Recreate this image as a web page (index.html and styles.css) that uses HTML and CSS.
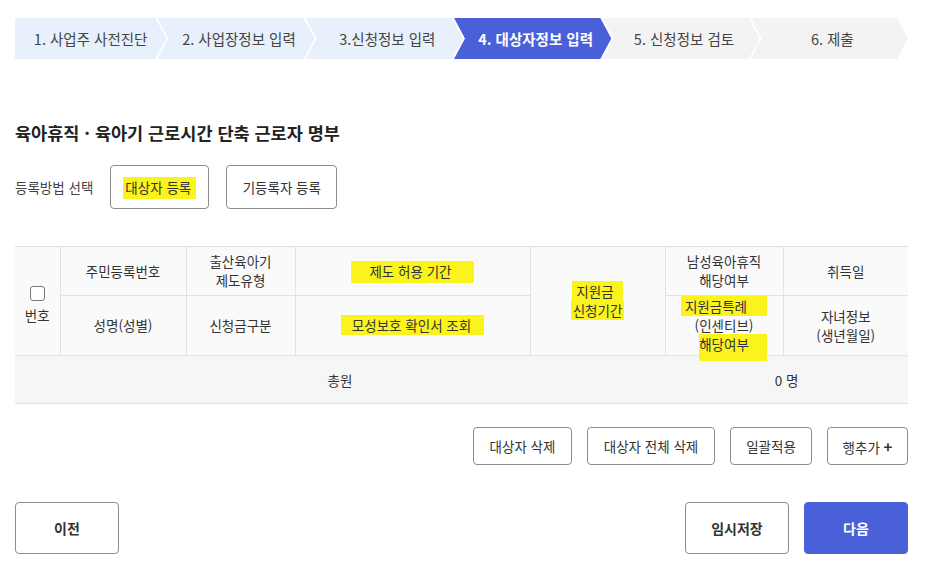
FILE: index.html
```html
<!DOCTYPE html>
<html lang="ko">
<head>
  <meta charset="UTF-8">
  <title>대상자정보 입력</title>
  <link rel="stylesheet" href="styles.css">
</head>
<body>
  <div class="page">
    <!-- Steps -->
    <ol class="steps">
      <li class="step done first">1. 사업주 사전진단</li>
      <li class="step done">2. 사업장정보 입력</li>
      <li class="step done">3.신청정보 입력</li>
      <li class="step current">4. 대상자정보 입력</li>
      <li class="step todo">5. 신청정보 검토</li>
      <li class="step todo">6. 제출</li>
    </ol>

    <h2 class="title">육아휴직 · 육아기 근로시간 단축 근로자 명부</h2>

    <div class="reg-row">
      <span class="reg-label">등록방법 선택</span>
      <button class="btn btn-reg reg-self"><span class="mark mark-reg">대상자 등록</span></button>
      <button class="btn btn-reg reg-old">기등록자 등록</button>
    </div>

    <table class="roster">
      <colgroup>
        <col style="width:45px">
        <col style="width:126px">
        <col style="width:109px">
        <col style="width:235px">
        <col style="width:135px">
        <col style="width:118px">
        <col style="width:125px">
      </colgroup>
      <thead>
        <tr class="head-1">
          <th rowspan="2" class="col-check">
            <span class="checkbox"></span>
            <span class="no-label">번호</span>
          </th>
          <th>주민등록번호</th>
          <th>출산육아기<br>제도유형</th>
          <th><span class="mark mark-period">제도 허용 기간</span></th>
          <th rowspan="2" class="col-apply"><span class="mark mark-apply">지원금</span><br><span class="mark mark-apply2">신청기간</span></th>
          <th>남성육아휴직<br>해당여부</th>
          <th class="last">취득일</th>
        </tr>
        <tr class="head-2">
          <th>성명(성별)</th>
          <th>신청금구분</th>
          <th><span class="mark mark-check">모성보호 확인서 조회</span></th>
          <th><span class="mark mark-special">지원금특례</span><br>(인센티브)<br><span class="mark mark-yn">해당여부</span></th>
          <th class="last">자녀정보<br>(생년월일)</th>
        </tr>
      </thead>
      <tfoot>
        <tr class="total">
          <td colspan="5">총원</td>
          <td colspan="2">0 명</td>
        </tr>
      </tfoot>
    </table>

    <div class="actions">
      <button class="btn btn-sm">대상자 삭제</button>
      <button class="btn btn-sm">대상자 전체 삭제</button>
      <button class="btn btn-sm">일괄적용</button>
      <button class="btn btn-sm">행추가 <b class="plus">+</b></button>
    </div>

    <div class="nav">
      <button class="btn btn-lg">이전</button>
      <div class="nav-right">
        <button class="btn btn-lg">임시저장</button>
        <button class="btn btn-lg btn-primary">다음</button>
      </div>
    </div>
  </div>
</body>
</html>
```

FILE: styles.css
```css
body {
  margin: 0;
  background: #fff;
  font-family: "Noto Sans CJK KR", "Noto Sans", sans-serif;
  color: #333;
}
.page {
  width: 893px;
  margin-left: 15px;
  padding-top: 18px;
}

/* Steps */
.steps {
  display: flex;
  list-style: none;
  margin: 0;
  padding: 0;
  height: 41px;
}
.step {
  flex: 1;
  display: flex;
  align-items: center;
  justify-content: center;
  font-size: 14.5px;
  color: #444;
  margin-left: -9px;
  padding-left: 6px;
  clip-path: polygon(0 0, calc(100% - 11px) 0, 100% 50%, calc(100% - 11px) 100%, 0 100%, 11px 50%);
}
.step.first {
  margin-left: 0;
  padding-left: 0;
  clip-path: polygon(0 0, calc(100% - 11px) 0, 100% 50%, calc(100% - 11px) 100%, 0 100%);
}
.step.done {
  background: #e7f0fb;
}
.step.current {
  background: #4a60d8;
  color: #fff;
  font-weight: bold;
}
.step.todo {
  background: #f3f3f3;
}

/* Title and registration */
.title {
  margin: 61px 0 0;
  font-size: 17.5px;
  font-weight: bold;
  color: #222;
  line-height: 26px;
}
.reg-row {
  display: flex;
  align-items: center;
  margin-top: 19px;
  gap: 17px;
}
.reg-label {
  font-size: 13.5px;
  color: #444;
}
.btn {
  font-family: inherit;
  background: #fff;
  border: 1px solid #8c8c8c;
  border-radius: 4px;
  color: #333;
  font-size: 13.5px;
  cursor: pointer;
  padding: 0;
  white-space: nowrap;
}
.btn-reg {
  height: 44px;
}
.reg-self {
  width: 99px;
}
.reg-old {
  width: 111px;
}

/* Highlighter marks */
.mark {
  background: #fbf31c;
  padding: 0 6px;
}
.mark-reg {
  padding: 0 5px 0 2px;
  box-shadow: 0 2px 0 #fbf31c;
}
.mark-period {
  padding: 0 22px 0 18px;
  box-shadow: 0 2px 0 #fbf31c;
}
.mark-check {
  padding: 0 13px 0 11px;
}
.mark-apply {
  padding: 0 9px 0 4px;
}
.mark-apply2 {
  padding: 0 2px;
}
.mark-special {
  padding: 0 20px 0 4px;
}
.mark-yn {
  padding: 0 18px 0 0;
  margin-right: -18px;
  box-shadow: 0 7px 0 #fbf31c;
}

/* Table */
.roster {
  width: 893px;
  margin-top: 37px;
  border-collapse: collapse;
  table-layout: fixed;
  font-size: 13.5px;
}
.roster th {
  font-weight: normal;
  background: #fafafa;
  border-right: 1px solid #e2e2e2;
  border-bottom: 1px solid #e2e2e2;
  line-height: 19px;
  padding: 0;
  color: #333;
}
.roster th.last {
  border-right: none;
}
.roster thead tr.head-1 th {
  border-top: 1px solid #e0e0e0;
}
.head-1 {
  height: 49px;
}
.head-2 {
  height: 60px;
}
.col-check {
  vertical-align: middle;
}
.col-apply {
  padding-top: 2px;
}
.checkbox {
  display: block;
  width: 13px;
  height: 13px;
  margin: 8px auto 5px;
  border: 1px solid #777;
  border-radius: 3px;
  background: #fff;
}
.no-label {
  display: block;
}
.total {
  height: 48px;
  background: #f6f6f6;
}
.total td {
  text-align: center;
  border-bottom: 1px solid #e2e2e2;
}

/* Actions */
.actions {
  display: flex;
  justify-content: flex-end;
  gap: 15px;
  margin-top: 23px;
}
.btn-sm {
  height: 38px;
}
.actions .btn-sm:nth-child(1) { width: 99px; }
.actions .btn-sm:nth-child(2) { width: 128px; }
.actions .btn-sm:nth-child(3) { width: 82px; }
.actions .btn-sm:nth-child(4) { width: 81px; }
.plus {
  font-size: 15px;
}

/* Bottom navigation */
.nav {
  display: flex;
  justify-content: space-between;
  margin-top: 37px;
}
.nav-right {
  display: flex;
  gap: 15px;
}
.btn-lg {
  width: 104px;
  height: 52px;
  font-size: 14px;
  font-weight: bold;
}
.btn-primary {
  background: #4a60d8;
  border-color: #4a60d8;
  color: #fff;
}
```
